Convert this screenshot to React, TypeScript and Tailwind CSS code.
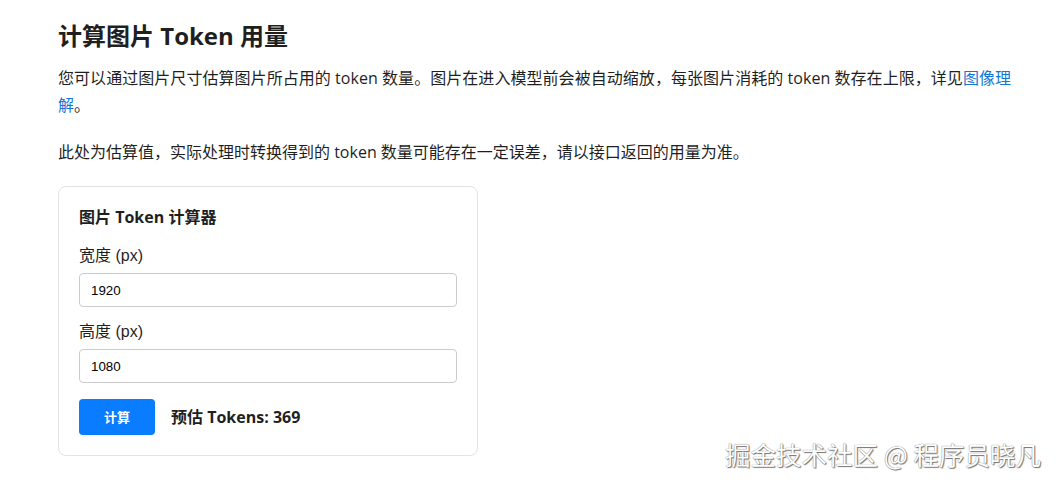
import React from "react";

export default function App() {
  return (
    <div className="relative min-h-[485px] w-full bg-white text-[#1f1f1f]">
      <div className="pl-[58px] pt-[20px] w-[1024px] [font-family:'Open_Sans','Noto_Sans_CJK_SC',sans-serif]">
        <h1 className="text-[24px] leading-[32px] font-bold mb-[13px]">计算图片 Token 用量</h1>
        <p className="text-[16px] leading-[27px] mb-[20px] tracking-[0.05px]">
          您可以通过图片尺寸估算图片所占用的 token 数量。图片在进入模型前会被自动缩放，每张图片消耗的 token 数存在上限，详见
          <a className="text-[#1677d2]">图像理解</a>。
        </p>
        <p className="text-[16px] leading-[27px] mb-[20px]">
          此处为估算值，实际处理时转换得到的 token 数量可能存在一定误差，请以接口返回的用量为准。
        </p>
        <div className="w-[420px] rounded-[8px] border border-[#e3e3e3] px-[20px] pt-[18px] pb-[20px]">
          <div className="text-[16px] leading-[24px] font-bold mb-[15px]">图片 Token 计算器</div>
          <div className="text-[16px] leading-[24px] mb-[5px] [font-family:'Liberation_Sans','Noto_Sans_CJK_SC',sans-serif]">宽度 (px)</div>
          <input
            readOnly
            value="1920"
            className="block w-full h-[34px] rounded-[4px] border border-[#cccccc] px-[11px] text-[13.33px] text-black [font-family:'Liberation_Sans',sans-serif] outline-none"
          />
          <div className="text-[16px] leading-[24px] mt-[13px] mb-[5px] [font-family:'Liberation_Sans','Noto_Sans_CJK_SC',sans-serif]">高度 (px)</div>
          <input
            readOnly
            value="1080"
            className="block w-full h-[34px] rounded-[4px] border border-[#cccccc] px-[11px] text-[13.33px] text-black [font-family:'Liberation_Sans',sans-serif] outline-none"
          />
          <div className="mt-[16px] flex items-center gap-[16px]">
            <button className="w-[76px] h-[36px] rounded-[4px] bg-[#0a7cff] text-white text-[13px] font-bold [font-family:'Noto_Sans_CJK_SC',sans-serif]">
              计算
            </button>
            <div className="text-[16px] font-bold">预估 Tokens: 369</div>
          </div>
        </div>
      </div>
      <div className="absolute right-[16px] bottom-[16px] text-[25.5px] leading-[30px] text-white [font-family:'Noto_Sans_CJK_SC',sans-serif] [text-shadow:0_0_1px_#555,1px_1px_1px_#777]">
        掘金技术社区 @ 程序员晓凡
      </div>
    </div>
  );
}
